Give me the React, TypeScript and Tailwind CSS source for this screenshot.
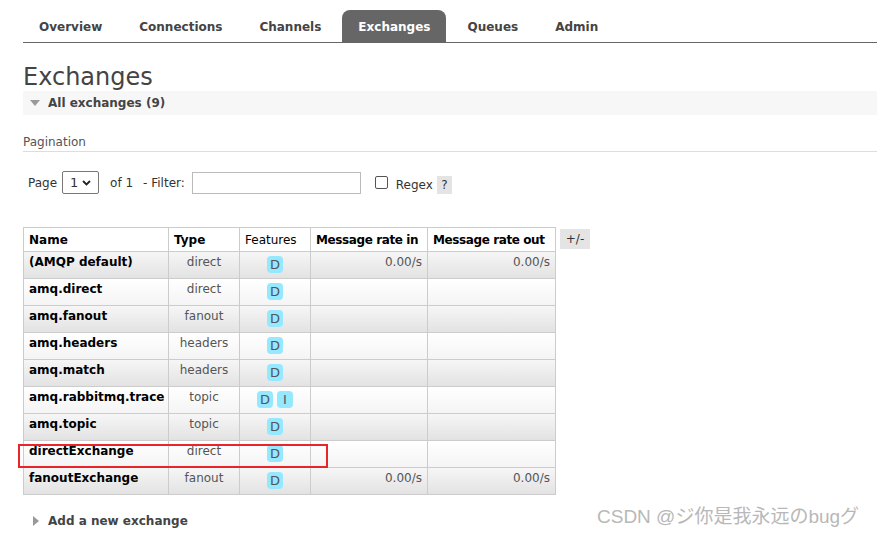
import React from 'react'

const tabs = ['Overview', 'Connections', 'Channels', 'Exchanges', 'Queues', 'Admin']

const rows: { name: string; type: string; features: string[]; rin: string; rout: string }[] = [
  { name: '(AMQP default)', type: 'direct', features: ['D'], rin: '0.00/s', rout: '0.00/s' },
  { name: 'amq.direct', type: 'direct', features: ['D'], rin: '', rout: '' },
  { name: 'amq.fanout', type: 'fanout', features: ['D'], rin: '', rout: '' },
  { name: 'amq.headers', type: 'headers', features: ['D'], rin: '', rout: '' },
  { name: 'amq.match', type: 'headers', features: ['D'], rin: '', rout: '' },
  { name: 'amq.rabbitmq.trace', type: 'topic', features: ['D', 'I'], rin: '', rout: '' },
  { name: 'amq.topic', type: 'topic', features: ['D'], rin: '', rout: '' },
  { name: 'directExchange', type: 'direct', features: ['D'], rin: '', rout: '' },
  { name: 'fanoutExchange', type: 'fanout', features: ['D'], rin: '0.00/s', rout: '0.00/s' },
]

function Badge({ label }: { label: string }) {
  return (
    <span className="inline-block h-[17px] min-w-[16px] rounded-[4px] bg-[#94e8ff] px-[3px] text-center text-[13px] leading-[17px] text-[#555]">
      {label}
    </span>
  )
}

export default function App() {
  return (
    <div className="relative h-[535px] w-[877px] overflow-hidden bg-white pl-[23px] font-['DejaVu_Sans',Verdana,sans-serif] text-[12px] text-[#444]">
      <nav className="flex h-[43px] items-end gap-[5px] border-b border-[#666] pt-[10px]">
        {tabs.map(t => (
          <div
            key={t}
            className={
              t === 'Exchanges'
                ? 'flex h-[32px] items-center rounded-t-[8px] bg-[#666] px-[16px] pt-[1px] text-[12px] font-bold text-white'
                : 'flex h-[32px] items-center px-[16px] pt-[1px] text-[12px] font-bold text-[#444]'
            }
          >
            {t}
          </div>
        ))}
      </nav>

      <h1 className="mt-[20px] text-[24px] leading-[28px] text-[#444]">Exchanges</h1>

      <div className="flex h-[24px] items-center bg-[#f7f7f7]">
        <svg width="10" height="6" viewBox="0 0 10 6" className="ml-[7px] mr-[8px]">
          <path d="M0 0 L10 0 L5 6 Z" fill="#999" />
        </svg>
        <span className="text-[12px] font-bold text-[#444]">All exchanges (9)</span>
      </div>

      <div className="mt-[18px] border-b border-[#ddd] pb-0 text-[12px] text-[#555]">Pagination</div>

      <div className="mt-[19px] flex h-[23px] items-center pl-[5px] text-[12px] text-[#333]">
        <span>Page</span>
        <div className="ml-[5px] flex h-[23px] w-[37px] items-center justify-between rounded-[2px] border border-[#777] px-[7px] text-[13px]">
          <span>1</span>
          <svg width="9" height="6" viewBox="0 0 9 6">
            <path d="M1 1 L4.5 4.5 L8 1" stroke="#222" strokeWidth="1.8" fill="none" />
          </svg>
        </div>
        <span className="ml-[11px]">of 1</span>
        <span className="ml-[10px]">- Filter:</span>
        <div className="ml-[7px] h-[22px] w-[169px] border border-[#bbb]" />
        <div className="ml-[14px] h-[13px] w-[13px] rounded-[2px] border border-[#555]" />
        <span className="ml-[8px] mt-[4px]">Regex</span>
        <span className="ml-[4px] mt-[4px] flex h-[18px] w-[15px] items-center justify-center bg-[#e4e4e4]">?</span>
      </div>

      <div className="mt-[33px] flex items-start">
        <table className="w-[532px] table-fixed border-collapse text-[12px]">
          <colgroup>
            <col className="w-[145px]" />
            <col className="w-[71px]" />
            <col className="w-[71px]" />
            <col className="w-[117px]" />
            <col className="w-[128px]" />
          </colgroup>
          <thead>
            <tr className="h-[24px] bg-white">
              <th className="whitespace-nowrap border border-[#ccc] px-[5px] text-left font-bold text-black">Name</th>
              <th className="whitespace-nowrap border border-[#ccc] px-[5px] text-left font-bold text-black">Type</th>
              <th className="whitespace-nowrap border border-[#ccc] px-[5px] text-left font-normal text-black">Features</th>
              <th className="whitespace-nowrap border border-[#ccc] px-[5px] text-left font-bold tracking-[-0.4px] text-black">Message rate in</th>
              <th className="whitespace-nowrap border border-[#ccc] px-[5px] text-left font-bold tracking-[-0.4px] text-black">Message rate out</th>
            </tr>
          </thead>
          <tbody>
            {rows.map((r, i) => (
              <tr
                key={r.name}
                className={
                  i % 2 === 0
                    ? 'h-[27px] bg-gradient-to-b from-[#f6f6f6] to-[#e2e2e2]'
                    : 'h-[27px] bg-gradient-to-b from-[#ffffff] to-[#f4f4f4]'
                }
              >
                <td className="whitespace-nowrap border border-[#ccc] px-[5px] pb-[6px] pt-[1px] align-top text-[12px] font-bold text-black">{r.name}</td>
                <td className="border border-[#ccc] px-[5px] pb-[6px] pt-[1px] text-center align-top text-[#555]">{r.type}</td>
                <td className="border border-[#ccc] px-[4px] pt-[4px] text-center align-top">
                  <span className="inline-flex gap-[4px]">
                    {r.features.map(f => (
                      <Badge key={f} label={f} />
                    ))}
                  </span>
                </td>
                <td className="border border-[#ccc] px-[5px] pt-[1px] text-right align-top text-[#555]">{r.rin}</td>
                <td className="border border-[#ccc] px-[5px] pt-[1px] text-right align-top text-[#555]">{r.rout}</td>
              </tr>
            ))}
          </tbody>
        </table>
        <span className="ml-[4px] mt-[2px] flex h-[20px] w-[30px] items-center justify-center bg-[#e4e4e4] text-[12px] text-[#333]">+/-</span>
      </div>

      <div className="mt-[17px] flex items-center">
        <svg width="6" height="10" viewBox="0 0 6 10" className="ml-[10px] mr-[9px]">
          <path d="M0 0 L6 5 L0 10 Z" fill="#999" />
        </svg>
        <span className="text-[12px] font-bold text-[#444]">Add a new exchange</span>
      </div>

      <div className="pointer-events-none absolute left-[18px] top-[444px] h-[24px] w-[310px] border-2 border-[#e8262a]" />

      <div className="pointer-events-none absolute left-[597px] top-[503px] font-['Liberation_Sans','Noto_Sans_CJK_JP',sans-serif] text-[19px] text-[#b8b8b8]">
        CSDN @ジ你是我永远のbugグ
      </div>
    </div>
  )
}
